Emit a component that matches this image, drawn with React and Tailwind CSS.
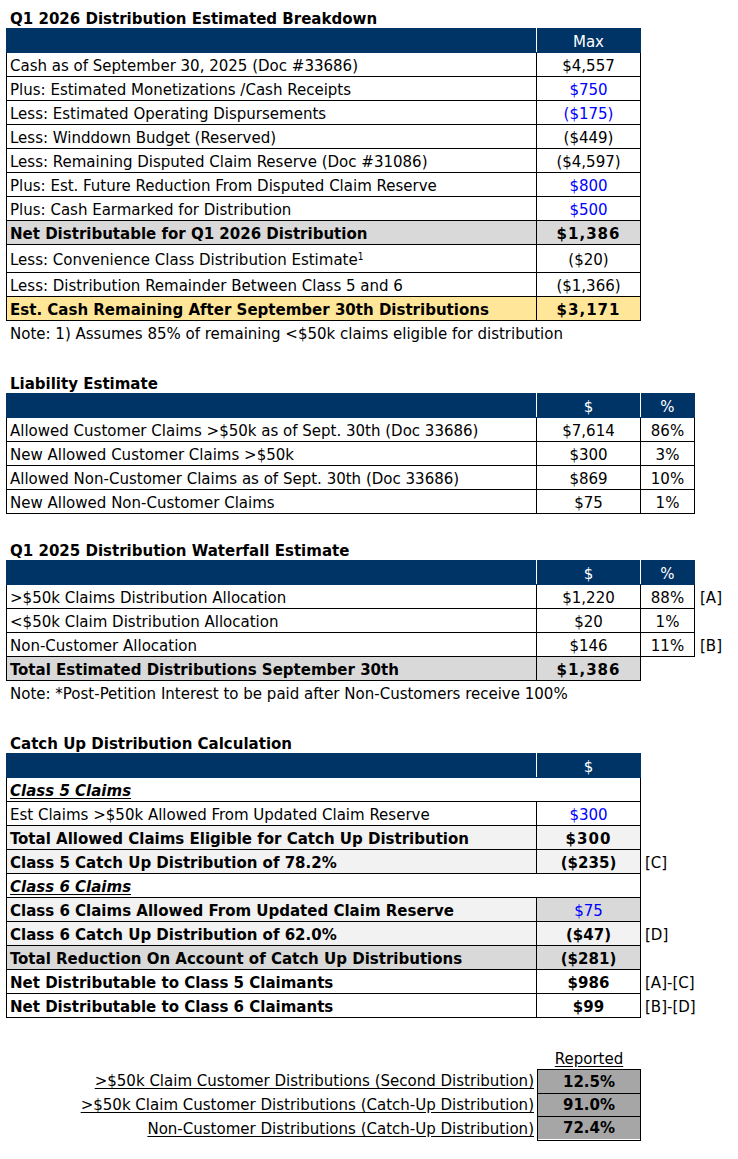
import React from 'react';

const navy = 'bg-[#003366] text-white';

function Title({ children }) {
    return <div className="h-[24px] pl-[4px] flex items-end font-bold leading-[20px]">{children}</div>;
}

function Note({ children }) {
    return <div className="h-[24px] pl-[4px] flex items-center leading-[20px]">{children}</div>;
}

const cell = 'border border-black px-[3px] py-0 leading-[18px] align-middle whitespace-nowrap';
const val = 'border border-black px-[3px] py-0 leading-[18px] align-middle text-center whitespace-nowrap';

function Header({ cols }) {
    return (
        <tr className={`h-[24px] ${navy}`}>
            <td className="border border-[#003366] border-r-white p-0"></td>
            {cols.map((c, i) => (
                <td key={i} className={`border border-[#003366] ${i < cols.length - 1 ? 'border-r-white' : ''} text-center p-0 leading-[18px]`}>{c}</td>
            ))}
        </tr>
    );
}

function Breakdown() {
    const rows = [
        ['Cash as of September 30, 2025 (Doc #33686)', '$4,557', ''],
        ['Plus: Estimated Monetizations /Cash Receipts', '$750', 'blue'],
        ['Less: Estimated Operating Dispursements', '($175)', 'blue'],
        ['Less: Winddown Budget (Reserved)', '($449)', ''],
        ['Less: Remaining Disputed Claim Reserve (Doc #31086)', '($4,597)', ''],
        ['Plus: Est. Future Reduction From Disputed Claim Reserve', '$800', 'blue'],
        ['Plus: Cash Earmarked for Distribution', '$500', 'blue'],
    ];
    return (
        <table className="table-fixed border-collapse w-[634px]">
            <colgroup><col className="w-[530px]" /><col className="w-[104px]" /></colgroup>
            <tbody>
                <Header cols={['Max']} />
                {rows.map(([l, v, c]) => (
                    <tr key={l} className="h-[24px]">
                        <td className={cell}>{l}</td>
                        <td className={`${val} ${c === 'blue' ? 'text-[#0000ff]' : ''}`}>{v}</td>
                    </tr>
                ))}
                <tr className="h-[24px] bg-[#d9d9d9] font-bold">
                    <td className={cell}>Net Distributable for Q1 2026 Distribution</td>
                    <td className={`${val} tracking-[1px]`}>$1,386</td>
                </tr>
                <tr className="h-[28px]">
                    <td className={cell}>Less: Convenience Class Distribution Estimate<sup className="text-[10px] leading-none">1</sup></td>
                    <td className={val}>($20)</td>
                </tr>
                <tr className="h-[24px]">
                    <td className={cell}>Less: Distribution Remainder Between Class 5 and 6</td>
                    <td className={val}>($1,366)</td>
                </tr>
                <tr className="h-[24px] bg-[#ffe699] font-bold">
                    <td className={cell}>Est. Cash Remaining After September 30th Distributions</td>
                    <td className={`${val} tracking-[1px]`}>$3,171</td>
                </tr>
            </tbody>
        </table>
    );
}

function Liability() {
    const rows = [
        ['Allowed Customer Claims >$50k as of Sept. 30th (Doc 33686)', '$7,614', '86%'],
        ['New Allowed Customer Claims >$50k', '$300', '3%'],
        ['Allowed Non-Customer Claims as of Sept. 30th (Doc 33686)', '$869', '10%'],
        ['New Allowed Non-Customer Claims', '$75', '1%'],
    ];
    return (
        <table className="table-fixed border-collapse w-[688px]">
            <colgroup><col className="w-[530px]" /><col className="w-[104px]" /><col className="w-[54px]" /></colgroup>
            <tbody>
                <Header cols={['$', '%']} />
                {rows.map(([l, v, p]) => (
                    <tr key={l} className="h-[24px]">
                        <td className={cell}>{l}</td>
                        <td className={val}>{v}</td>
                        <td className={val}>{p}</td>
                    </tr>
                ))}
            </tbody>
        </table>
    );
}

function Waterfall() {
    const rows = [
        ['>$50k Claims Distribution Allocation', '$1,220', '88%', '[A]'],
        ['<$50k Claim Distribution Allocation', '$20', '1%', ''],
        ['Non-Customer Allocation', '$146', '11%', '[B]'],
    ];
    return (
        <table className="table-fixed border-collapse w-[730px]">
            <colgroup><col className="w-[530px]" /><col className="w-[104px]" /><col className="w-[54px]" /><col className="w-[42px]" /></colgroup>
            <tbody>
                <tr className="h-[24px]">
                    <td className="border border-[#003366] border-r-white p-0 bg-[#003366]"></td>
                    <td className="border border-[#003366] border-r-white p-0 text-center text-white bg-[#003366] leading-[18px]">$</td>
                    <td className="border border-[#003366] p-0 text-center text-white bg-[#003366] leading-[18px]">%</td>
                    <td></td>
                </tr>
                {rows.map(([l, v, p, b]) => (
                    <tr key={l} className="h-[24px]">
                        <td className={cell}>{l}</td>
                        <td className={val}>{v}</td>
                        <td className={val}>{p}</td>
                        <td className="px-[5px] leading-[18px]">{b}</td>
                    </tr>
                ))}
                <tr className="h-[24px] font-bold">
                    <td className={`${cell} bg-[#d9d9d9]`}>Total Estimated Distributions September 30th</td>
                    <td className={`${val} bg-[#d9d9d9] tracking-[1px]`}>$1,386</td>
                    <td></td>
                    <td></td>
                </tr>
            </tbody>
        </table>
    );
}

function CatchUp() {
    const rows = [
        { t: 'head', l: 'Class 5 Claims' },
        { l: 'Est Claims >$50k Allowed From Updated Claim Reserve', v: '$300', vc: 'text-[#0000ff]' },
        { l: 'Total Allowed Claims Eligible for Catch Up Distribution', v: '$300', bold: true, bg: 'bg-[#f2f2f2]', vbg: 'bg-[#f2f2f2]', track: true },
        { l: 'Class 5 Catch Up Distribution of 78.2%', v: '($235)', bold: true, bg: 'bg-[#f2f2f2]', vbg: 'bg-[#f2f2f2]', b: '[C]' },
        { t: 'head', l: 'Class 6 Claims' },
        { l: 'Class 6 Claims Allowed From Updated Claim Reserve', v: '$75', bold: true, vc: 'text-[#0000ff] font-normal', bg: 'bg-[#f2f2f2]', vbg: 'bg-[#d9d9d9]' },
        { l: 'Class 6 Catch Up Distribution of 62.0%', v: '($47)', bold: true, bg: 'bg-[#f2f2f2]', vbg: 'bg-[#f2f2f2]', b: '[D]' },
        { l: 'Total Reduction On Account of Catch Up Distributions', v: '($281)', bold: true, bg: 'bg-[#d9d9d9]', vbg: 'bg-[#d9d9d9]' },
        { l: 'Net Distributable to Class 5 Claimants', v: '$986', bold: true, b: '[A]-[C]' },
        { l: 'Net Distributable to Class 6 Claimants', v: '$99', bold: true, b: '[B]-[D]' },
    ];
    return (
        <table className="table-fixed border-collapse w-[710px]">
            <colgroup><col className="w-[530px]" /><col className="w-[104px]" /><col className="w-[76px]" /></colgroup>
            <tbody>
                <tr className="h-[24px]">
                    <td className="border border-[#003366] border-r-white p-0 bg-[#003366]"></td>
                    <td className="border border-[#003366] p-0 text-center text-white bg-[#003366] leading-[18px]">$</td>
                    <td></td>
                </tr>
                {rows.map((r) =>
                    r.t === 'head' ? (
                        <tr key={r.l} className="h-[24px]">
                            <td colSpan={2} className={`${cell} font-bold italic underline underline-offset-2`}>{r.l}</td>
                            <td></td>
                        </tr>
                    ) : (
                        <tr key={r.l} className={`h-[24px] ${r.bold ? 'font-bold' : ''}`}>
                            <td className={`${cell} ${r.bg || ''}`}>{r.l}</td>
                            <td className={`${val} ${r.vbg || ''} ${r.vc || ''} ${r.track ? 'tracking-[1px]' : ''}`}>{r.v}</td>
                            <td className="px-[4px] leading-[18px] font-normal whitespace-nowrap">{r.b || ''}</td>
                        </tr>
                    )
                )}
            </tbody>
        </table>
    );
}

function Reported() {
    const rows = [
        ['>$50k Claim Customer Distributions (Second Distribution)', '12.5%'],
        ['>$50k Claim Customer Distributions (Catch-Up Distribution)', '91.0%'],
        ['Non-Customer Distributions (Catch-Up Distribution)', '72.4%'],
    ];
    return (
        <div className="flex flex-col">
            <div className="flex h-[26px] items-end">
                <div className="w-[531px]"></div>
                <div className="w-[104px] text-center leading-[22px] underline underline-offset-2">Reported</div>
            </div>
            <div className="flex">
                <div className="w-[531px] flex flex-col items-end">
                    {rows.map(([l]) => (
                        <div key={l} className="h-[24px] pr-[3px] flex items-center underline underline-offset-2 whitespace-nowrap">{l}</div>
                    ))}
                </div>
                <div className="w-[104px] flex flex-col border border-black">
                    {rows.map(([l, v], i) => (
                        <div key={l} className={`h-[23px] flex items-center justify-center bg-[#a6a6a6] font-bold ${i > 0 ? 'border-t border-black' : ''}`}>{v}</div>
                    ))}
                </div>
            </div>
        </div>
    );
}

export default function App() {
    return (
        <div className="w-[738px] h-[1159px] bg-white text-black text-[16.7px] font-['DejaVu_Sans_Condensed','DejaVu_Sans',sans-serif] pt-[4px] pl-[6px] [font-stretch:condensed]">
            <Title>Q1 2026 Distribution Estimated Breakdown</Title>
            <Breakdown />
            <Note>Note: 1) Assumes 85% of remaining &lt;$50k claims eligible for distribution</Note>
            <div className="h-[24px]"></div>
            <Title>Liability Estimate</Title>
            <Liability />
            <div className="h-[22px]"></div>
            <Title>Q1 2025 Distribution Waterfall Estimate</Title>
            <Waterfall />
            <Note>Note: *Post-Petition Interest to be paid after Non-Customers receive 100%</Note>
            <div className="h-[24px]"></div>
            <Title>Catch Up Distribution Calculation</Title>
            <CatchUp />
            <div className="h-[25px]"></div>
            <Reported />
        </div>
    );
}
